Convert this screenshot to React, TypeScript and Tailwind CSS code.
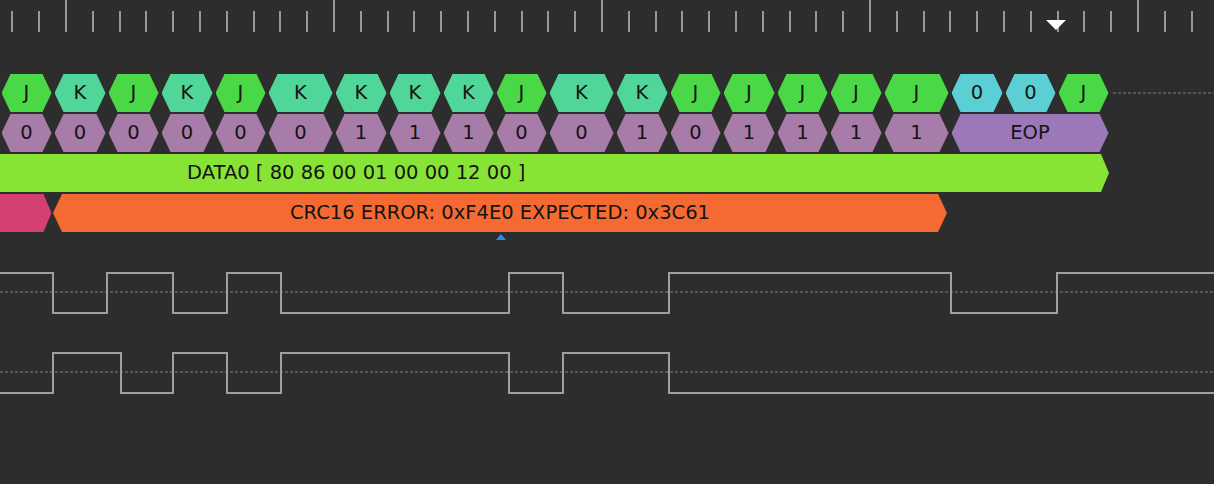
import React from 'react';

// sample boundaries (px) along the time axis
const bounds = [0, 53, 107, 160, 214, 267, 334, 388, 442, 495, 548, 615, 669, 722, 776, 829, 883, 950, 1004, 1057, 1110];
const states = ['J', 'K', 'J', 'K', 'J', 'K', 'K', 'K', 'K', 'J', 'K', 'K', 'J', 'J', 'J', 'J', 'J', '0', '0', 'J'];
const bits = ['0', '0', '0', '0', '0', '0', '1', '1', '1', '0', '0', '1', '0', '1', '1', '1', '1'];

const stateColor: Record<string, string> = {
  J: 'bg-[#4ad846]',
  K: 'bg-[#50d698]',
  '0': 'bg-[#5ccfd4]',
};

const hex = '[clip-path:polygon(9px_0,calc(100%_-_9px)_0,100%_50%,calc(100%_-_9px)_100%,9px_100%,0_50%)]';

function Cell({ from, to, color, label }: { from: number; to: number; color: string; label: string }) {
  return (
    <div className="shrink-0 px-[1.5px]" style={{ width: to - from }}>
      <div className={`h-[38px] flex items-center justify-center ${hex} ${color}`}>{label}</div>
    </div>
  );
}

function Ruler() {
  const ticks: { x: number; major: boolean }[] = [];
  for (let i = -2; 66 + 26.8 * i < 1214; i++) {
    ticks.push({ x: Math.round(66 + 26.8 * i), major: i % 10 === 0 });
  }
  return (
    <svg width="1214" height="74" viewBox="0 0 1214 74" className="block">
      {ticks.map((t) => (
        <rect key={t.x} x={t.x - 1} y={t.major ? 0 : 11} width="2" height={t.major ? 32 : 21} fill="#989898" />
      ))}
      <polygon points="1046,20 1066,20 1056,30" fill="#ffffff" />
    </svg>
  );
}

function Waves() {
  const top = 'M0 273 H53 V313 H107 V273 H173 V313 H227 V273 H281 V313 H509 V273 H563 V313 H669 V273 H951 V313 H1057 V273 H1214';
  const bottom = 'M0 393 H53 V353 H121 V393 H173 V353 H227 V393 H281 V353 H509 V393 H563 V353 H669 V393 H1214';
  return (
    <svg width="1214" height="252" viewBox="0 232 1214 252" className="block">
      <polygon points="496,240 506,240 501,234" fill="#2e8ee2" />
      <line x1="0" y1="292" x2="1214" y2="292" stroke="#565656" strokeWidth="2" strokeDasharray="3 2" />
      <line x1="0" y1="372" x2="1214" y2="372" stroke="#565656" strokeWidth="2" strokeDasharray="3 2" />
      <path d={top} fill="none" stroke="#a0a0a0" strokeWidth="2" />
      <path d={bottom} fill="none" stroke="#a0a0a0" strokeWidth="2" />
    </svg>
  );
}

export default function App() {
  return (
    <div className="w-[1214px] h-[484px] overflow-hidden bg-[#2d2d2d] font-['DejaVu_Sans',sans-serif] text-[19.5px] text-[#141414]">
      <Ruler />

      <div className="flex flex-col gap-[2px]">
        {/* line states */}
        <div className="flex items-center">
          {states.map((s, i) => (
            <Cell key={i} from={bounds[i]} to={bounds[i + 1]} color={stateColor[s]} label={s} />
          ))}
          <div className="flex-1 h-[2px] ml-[3px] bg-[repeating-linear-gradient(90deg,#565656_0_3px,transparent_3px_5px)]" />
        </div>

        {/* bits */}
        <div className="flex">
          {bits.map((b, i) => (
            <Cell key={i} from={bounds[i]} to={bounds[i + 1]} color="bg-[#a87ca8]" label={b} />
          ))}
          <Cell from={950} to={1110} color="bg-[#9c78b8]" label="EOP" />
        </div>

        {/* packet */}
        <div className="flex">
          <div className="w-[1109px] h-[38px] flex items-center pl-[187px] bg-[#88e434] [clip-path:polygon(0_0,calc(100%_-_8px)_0,100%_50%,calc(100%_-_8px)_100%,0_100%)]">
            DATA0 [ 80 86 00 01 00 00 12 00 ]
          </div>
        </div>

        {/* crc */}
        <div className="flex">
          <div className="w-[51.5px] h-[38px] bg-[#d64070] [clip-path:polygon(0_0,calc(100%_-_8px)_0,100%_50%,calc(100%_-_8px)_100%,0_100%)]" />
          <Cell from={53} to={950} color="bg-[#f46a32]" label="CRC16 ERROR: 0xF4E0 EXPECTED: 0x3C61" />
        </div>
      </div>

      <Waves />
    </div>
  );
}
